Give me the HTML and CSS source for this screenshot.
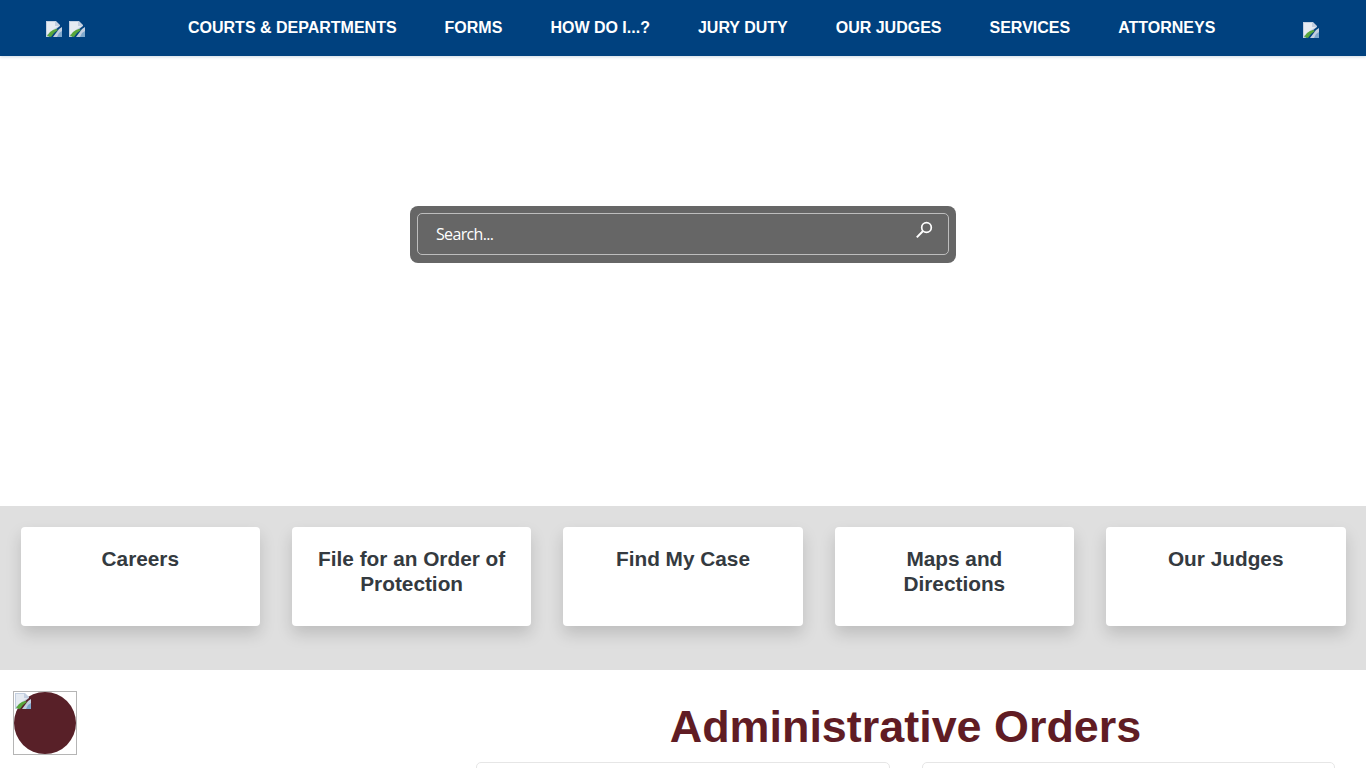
FILE: index.html
```html
<!DOCTYPE html>
<html lang="en">
<head>
  <meta charset="utf-8">
  <title>Administrative Orders</title>
  <link rel="stylesheet" href="styles.css">
</head>
<body>
  <svg class="sprite" width="0" height="0" aria-hidden="true">
    <symbol id="broken" viewBox="0 0 16 16">
      <path fill="#c3cfe0" d="M0 0h10l4 4v1l-5 4-3 3-3 4H0z"/>
      <path fill="#e6ebf2" d="M1 1h8v4h4l-5 3-3 3-3 2H1z"/>
      <path fill="#58a63c" d="M1 15l3-4 3-2 3-1 2 1-4 3-3 4z"/>
      <path fill="#c3cfe0" d="M13 8l3-2v10H7z"/>
      <path fill="#7fa8cc" d="M13 12l3-2v6h-5z"/>
    </symbol>
  </svg>

  <header class="topbar">
    <div class="logos">
      <svg class="broken"><use href="#broken"/></svg>
      <svg class="broken"><use href="#broken"/></svg>
    </div>
    <nav class="nav">
      <a href="#">COURTS &amp; DEPARTMENTS</a>
      <a href="#">FORMS</a>
      <a href="#">HOW DO I...?</a>
      <a href="#">JURY DUTY</a>
      <a href="#">OUR JUDGES</a>
      <a href="#">SERVICES</a>
      <a href="#">ATTORNEYS</a>
    </nav>
    <svg class="broken lang"><use href="#broken"/></svg>
  </header>

  <section class="hero">
    <form class="search">
      <div class="search-inner">
        <span class="search-text">Search...</span>
        <svg class="search-icon" width="18" height="18" viewBox="0 0 18 18">
          <circle cx="11.5" cy="6.5" r="4.8" fill="none" stroke="#fff" stroke-width="1.7"/>
          <path d="M8 10 1.8 16.4" fill="none" stroke="#fff" stroke-width="2"/>
        </svg>
      </div>
    </form>
  </section>

  <section class="quick">
    <a class="quick-card" href="#">Careers</a>
    <a class="quick-card" href="#">File for an Order of Protection</a>
    <a class="quick-card" href="#">Find My Case</a>
    <a class="quick-card" href="#">Maps and Directions</a>
    <a class="quick-card" href="#">Our Judges</a>
  </section>

  <main class="content">
    <aside class="side">
      <div class="seal">
        <span class="seal-dot"></span>
        <svg class="broken seal-img"><use href="#broken"/></svg>
      </div>
    </aside>
    <div class="orders">
      <h1>Administrative Orders</h1>
      <div class="order-grid">
        <div class="order-card"></div>
        <div class="order-card"></div>
      </div>
    </div>
  </main>
</body>
</html>
```

FILE: styles.css
```css
* { box-sizing: border-box; margin: 0; padding: 0; }
body {
  font-family: "Liberation Sans", Arial, sans-serif;
  background: #fff;
  color: #343a40;
}
.sprite { position: absolute; }
.broken { width: 16px; height: 16px; display: block; }

/* Top bar */
.topbar {
  height: 56px;
  background: #00417f;
  display: flex;
  align-items: center;
  box-shadow: 0 1px 3px rgba(0,65,127,0.2);
  position: relative;
}
.logos {
  display: flex;
  gap: 7px;
  width: 164px;
  padding-left: 46px;
  margin-top: 2px;
}
.nav { display: flex; flex: 1; margin-top: -1px; }
.nav a {
  color: #fff;
  font-size: 16px;
  font-weight: 700;
  text-decoration: none;
  padding: 0 24px;
  white-space: nowrap;
}
.lang { margin-right: 47px; margin-top: 3px; }

/* Hero */
.hero {
  height: 450px;
  display: flex;
  justify-content: center;
  padding-top: 150px;
}
.search {
  width: 546px;
  height: 57px;
  background: #666;
  border-radius: 8px;
  padding: 7px;
}
.search-inner {
  height: 42px;
  border: 1.5px solid #bdbdbd;
  border-radius: 5px;
  display: flex;
  align-items: center;
  justify-content: space-between;
  padding: 0 15px 0 18px;
}
.search-text {
  color: #fff;
  font-family: "Open Sans", "Noto Sans", sans-serif;
  font-size: 16px;
  letter-spacing: -0.65px;
}
.search-icon { margin-top: -8px; }

/* Quick links */
.quick {
  height: 164px;
  background: #dfdfdf;
  display: grid;
  grid-template-columns: repeat(5, 1fr);
  gap: 31.75px;
  padding: 21px 20.5px 0;
  align-items: start;
}
.quick-card {
  height: 99px;
  background: #fff;
  border-radius: 4px;
  padding: 19px 24px 0;
  box-shadow: 0 8px 16px rgba(0,0,0,0.15);
  color: #343a40;
  font-size: 20.8px;
  font-weight: 700;
  line-height: 25px;
  text-align: center;
  text-decoration: none;
}

/* Main content */
.content {
  display: flex;
  padding: 21px 31px 0 13px;
}
.side { width: 463px; flex-shrink: 0; }
.seal {
  width: 64px;
  height: 64px;
  border: 1px solid #b5b5b5;
  position: relative;
}
.seal-img { position: absolute; left: 1px; top: 1px; }
.seal-dot {
  position: absolute;
  inset: 0;
  background: #582028;
  border-radius: 50%;
}
.orders { flex: 1; }
.orders h1 {
  color: #601c24;
  font-size: 44.9px;
  font-weight: 700;
  line-height: 52px;
  text-align: center;
  margin-top: 10px;
  margin-bottom: 9px;
}
.order-grid {
  display: grid;
  grid-template-columns: 1fr 1fr;
  gap: 32px;
}
.order-card {
  height: 120px;
  background: #fff;
  border: 1px solid #e6e6e6;
  border-radius: 5px;
}
```
